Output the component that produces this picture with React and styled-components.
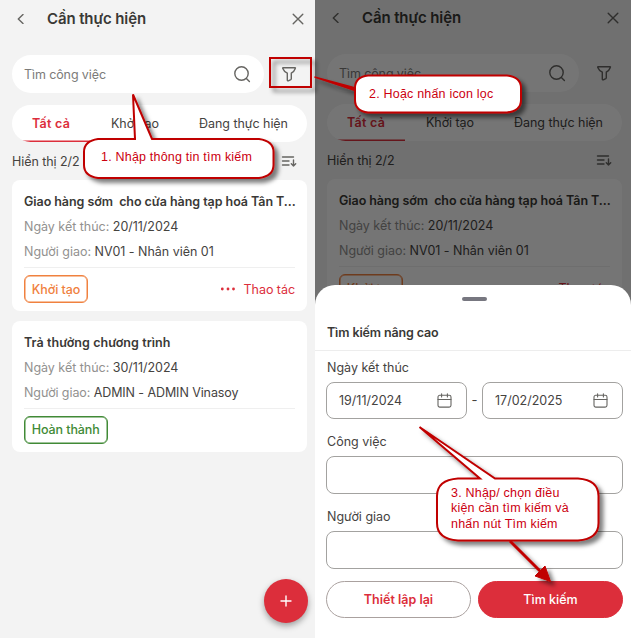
import React from "react";
import styled, { createGlobalStyle, css } from "styled-components";

const RED = "#dc2e3b";
const NOTE = "#c00000";

const Global = createGlobalStyle`
  *, *::before, *::after { box-sizing: border-box; }
  body { margin: 0; background: #fff; overflow: hidden; }
`;

const Stage = styled.div`
  position: relative;
  display: grid;
  grid-template-columns: 315px 316px;
  width: 631px;
  height: 638px;
  overflow: hidden;
  font-family: Inter, "Liberation Sans", sans-serif;
  color: #45433f;
`;

const Phone = styled.section`
  position: relative;
  height: 638px;
  overflow: hidden;
  background: #f3f3f3;
`;

const Screen = styled.div`
  width: 315px;
  margin-top: ${(p) => (p.$raised ? "-1px" : "0")};
  display: flex;
  flex-direction: column;
  padding-left: 12px;
  padding-right: 8px;
`;

const Header = styled.header`
  display: flex;
  align-items: center;
  height: 37px;
  padding: 0 2px 0 4px;
`;

const Heading = styled.h1`
  flex: 1;
  margin: 0 0 0 21px;
  font-size: 15px;
  line-height: 20px;
  font-weight: 600;
  letter-spacing: -0.12px;
  color: #3a3936;
`;

const Icon = styled.svg`
  display: block;
  flex: none;
  width: ${(p) => p.$size}px;
  height: ${(p) => p.$size}px;
  fill: none;
  stroke: ${(p) => p.$color || "#666562"};
  stroke-width: ${(p) => p.$weight || 1.4};
  stroke-linecap: round;
  stroke-linejoin: round;
`;

const SearchRow = styled.div`
  display: flex;
  align-items: center;
  margin-top: 18px;
  padding-right: 10px;
  justify-content: space-between;
`;

const SearchBox = styled.div`
  display: flex;
  align-items: center;
  justify-content: space-between;
  width: 252px;
  height: 38px;
  padding: 0 13px 0 12px;
  border-radius: 19px;
  background: #fff;
  font-size: 12.5px;
  letter-spacing: -0.1px;
  color: #7c7b79;
`;

const Tabs = styled.nav`
  display: flex;
  height: 37px;
  margin-top: 12px;
  border-radius: 18.5px;
  background: #fff;
  overflow: hidden;
`;

const Tab = styled.div`
  display: flex;
  align-items: center;
  justify-content: center;
  width: ${(p) => p.$w}px;
  height: 37px;
  font-size: 12.5px;
  letter-spacing: -0.05px;
  ${(p) =>
    p.$active &&
    css`
      box-shadow: inset 0 -1.5px 0 ${RED};
      font-weight: 600;
      letter-spacing: 0.25px;
      color: ${RED};
    `}
`;

const Count = styled.div`
  display: flex;
  align-items: center;
  justify-content: space-between;
  height: 38px;
  padding-right: 10px;
  font-size: 12.5px;
  letter-spacing: -0.07px;
`;

const Card = styled.article`
  height: 131px;
  margin-bottom: 9.5px;
  padding: 9px 12px 0;
  border-radius: 8px;
  background: #fff;
`;

const Title = styled.h2`
  margin: 0;
  font-size: 12.5px;
  line-height: 25px;
  font-weight: 600;
  letter-spacing: ${(p) => p.$ls}px;
  white-space: pre;
  color: #3a3936;
`;

const Line = styled.div`
  font-size: 12.5px;
  line-height: 25px;
  letter-spacing: ${(p) => p.$ls ?? -0.02}px;
  white-space: nowrap;
  color: #45433f;
`;

const Muted = styled.span`
  color: #92918f;
`;

const CardFoot = styled.div`
  display: flex;
  align-items: center;
  justify-content: space-between;
  margin-top: 3px;
  padding-top: 7px;
  border-top: 1px solid #efefef;
`;

const Chip = styled.div`
  display: flex;
  align-items: center;
  justify-content: center;
  width: ${(p) => p.$w}px;
  height: 28px;
  border: 1px solid ${(p) => p.$tone};
  box-shadow: inset 0 0 0 0.5px ${(p) => p.$tone};
  border-radius: 6px;
  font-size: 12.5px;
  font-weight: 500;
  letter-spacing: -0.1px;
  color: ${(p) => p.$tone};
`;

const Action = styled.div`
  display: flex;
  align-items: center;
  gap: 8px;
  font-size: 12.5px;
  letter-spacing: -0.05px;
  color: ${RED};
`;

const Fab = styled.button`
  position: absolute;
  left: 264px;
  top: 579px;
  width: 44px;
  height: 44px;
  padding: 0;
  display: flex;
  align-items: center;
  justify-content: center;
  border: 0;
  border-radius: 50%;
  background: ${RED};
  box-shadow: 0 3px 6px rgba(0, 0, 0, 0.35);
`;

const Dim = styled.div`
  position: absolute;
  inset: 0;
  background: rgba(0, 0, 0, 0.54);
`;

const Sheet = styled.div`
  position: absolute;
  left: 0;
  right: 0;
  top: 285px;
  bottom: 0;
  display: flex;
  flex-direction: column;
  border-radius: 20px 20px 0 0;
  background: #fff;
`;

const Grip = styled.div`
  align-self: center;
  width: 25px;
  height: 3.5px;
  margin: 12px 0 0 3px;
  border-radius: 2px;
  background: #777780;
`;

const SheetTitle = styled.h2`
  margin: 19.5px 0 0;
  padding: 0 12px 6px;
  height: 31px;
  border-bottom: 1px solid #ededed;
  font-size: 12.5px;
  line-height: 25px;
  font-weight: 600;
  letter-spacing: -0.13px;
  color: #3a3936;
`;

const Form = styled.div`
  padding: 4.5px 8px 0 11px;
`;

const Label = styled.div`
  height: 26px;
  font-size: 12.5px;
  line-height: 23px;
  letter-spacing: 0;
  padding-left: 1px;
`;

const Field = styled.div`
  display: flex;
  align-items: center;
  justify-content: space-between;
  width: ${(p) => (p.$w ? `${p.$w}px` : "auto")};
  height: 37.5px;
  margin-bottom: ${(p) => (p.$w ? 0 : 11.5)}px;
  padding: 0 14px 0 12px;
  border: 1px solid #a3a2a0;
  border-radius: 8px;
  font-size: 12.5px;
  letter-spacing: 0;
`;

const DateRow = styled.div`
  display: flex;
  align-items: center;
  justify-content: space-between;
  margin-bottom: 11px;
  font-size: 13px;
`;

const Buttons = styled.div`
  display: flex;
  justify-content: space-between;
  padding-top: 0.7px;
`;

const Button = styled.button`
  width: 145px;
  height: 37.5px;
  padding: 0;
  border: 1px solid ${(p) => (p.$solid ? RED : "#aaa19f")};
  border-radius: 19px;
  background: ${(p) => (p.$solid ? RED : "#fff")};
  color: ${(p) => (p.$solid ? "#fff" : RED)};
  font: ${(p) => (p.$solid ? 500 : 600)} 12.5px Inter, sans-serif;
  letter-spacing: 0;
`;

const Annotations = styled.svg`
  position: absolute;
  left: 0;
  top: 0;
  width: 631px;
  height: 638px;
`;

const Note = styled.div`
  position: absolute;
  left: ${(p) => p.$x}px;
  top: ${(p) => p.$y}px;
  font-family: "Liberation Sans", Arial, sans-serif;
  font-size: 12.5px;
  line-height: 15.5px;
  letter-spacing: 0.2px;
  white-space: pre;
  color: #cc0010;
`;

const Funnel = () => (
  <Icon $size={16} viewBox="0 0 16 16" $weight={1.4}>
    <path d="M2 1.7h12q.7 0 .3.7c-.7 2-2 3.500-4 4.800v5.600q0 .5-.5.8l-2.500 1.200q-1 .3-1-.7V7.200C4.200 6 2.600 4.500 1.800 2.400q-.3-.7.2-.7z" />
  </Icon>
);

const Calendar = () => (
  <Icon $size={15} viewBox="0 0 15 15" $weight={1.1}>
    <rect x="1" y="2.300" width="13" height="11.800" rx="1.800" />
    <path d="M1 6.500h13M4.600.8v3.200M10.400.8v3.200" />
  </Icon>
);

const tasks = [
  {
    title: "Giao hàng sớm  cho cửa hàng tạp hoá Tân T...",
    titleSpacing: -0.06,
    date: "20/11/2024",
    person: "NV01 - Nhân viên 01",
    status: "Khởi tạo",
    tone: "#f0813f",
    chipWidth: 64,
    action: true,
  },
  {
    title: "Trả thưởng chương trình",
    titleSpacing: 0.06,
    date: "30/11/2024",
    person: "ADMIN - ADMIN Vinasoy",
    personSpacing: -0.09,
    status: "Hoàn thành",
    tone: "#418a36",
    chipWidth: 83.5,
  },
];

function TaskCard({ title, titleSpacing, date, person, personSpacing, status, tone, chipWidth, action }) {
  return (
    <Card>
      <Title $ls={titleSpacing}>{title}</Title>
      <Line><Muted>Ngày kết thúc:</Muted> {date}</Line>
      <Line $ls={personSpacing}><Muted>Người giao:</Muted> {person}</Line>
      <CardFoot>
        <Chip $w={chipWidth} $tone={tone}>{status}</Chip>
        {action && (
          <Action>
            <Icon $size={16} viewBox="0 0 16 16" $color={RED} $weight={2.800}>
              <path d="M2.300 8h.01M8 8h.01M13.500 8h.01" />
            </Icon>
            Thao tác
          </Action>
        )}
      </CardFoot>
    </Card>
  );
}

function TaskList({ raised, items }) {
  return (
    <Screen $raised={raised}>
      <Header>
        <Icon $size={10} viewBox="0 0 10 10"><path d="M7 .5 2.300 5 7 9.500" /></Icon>
        <Heading>Cần thực hiện</Heading>
        <Icon $size={14} viewBox="0 0 14 14"><path d="M2.200 2.200l9.600 9.600M11.800 2.200l-9.600 9.600" /></Icon>
      </Header>
      <SearchRow>
        <SearchBox>
          Tìm công việc
          <Icon $size={18} viewBox="0 0 18 18">
            <circle cx="8.500" cy="8.500" r="6.700" /><path d="m13.400 13.400 3 3" />
          </Icon>
        </SearchBox>
        <Funnel />
      </SearchRow>
      <Tabs>
        <Tab $w={78} $active>Tất cả</Tab>
        <Tab $w={90}>Khởi tạo</Tab>
        <Tab $w={127}>Đang thực hiện</Tab>
      </Tabs>
      <Count>
        Hiển thị 2/2
        <Icon $size={16} viewBox="0 0 16 16" $weight={1.4}>
          <path d="M1.500 4h11M1.500 8h6.500M1.500 12h6.500M12.500 7v6M10.300 10.800l2.200 2.200 2.200-2.200" />
        </Icon>
      </Count>
      {items.map((task) => (
        <TaskCard key={task.title} {...task} />
      ))}
    </Screen>
  );
}

export default function App() {
  return (
    <Stage>
      <Global />
      <Phone>
        <TaskList items={tasks} />
        <Fab aria-label="+">
          <Icon $size={12} viewBox="0 0 12 12" $color="#fff" $weight={1.4}><path d="M6 1v10M1 6h10" /></Icon>
        </Fab>
      </Phone>
      <Phone>
        <TaskList raised items={tasks.slice(0, 1)} />
        <Dim />
        <Sheet>
          <Grip />
          <SheetTitle>Tìm kiếm nâng cao</SheetTitle>
          <Form>
            <Label>Ngày kết thúc</Label>
            <DateRow>
              <Field $w={141}>19/11/2024<Calendar /></Field>
              -
              <Field $w={141}>17/02/2025<Calendar /></Field>
            </DateRow>
            <Label>Công việc</Label>
            <Field />
            <Label>Người giao</Label>
            <Field />
            <Buttons>
              <Button>Thiết lập lại</Button>
              <Button $solid>Tìm kiếm</Button>
            </Buttons>
          </Form>
        </Sheet>
      </Phone>
      <Annotations viewBox="0 0 631 638">
        <defs>
          <filter id="shade" x="-20%" y="-40%" width="150%" height="200%">
            <feDropShadow dx="4" dy="4" stdDeviation="2" floodColor="#000" floodOpacity="0.5" />
          </filter>
        </defs>
        <g filter="url(#shade)" stroke={NOTE} strokeWidth="2" fill="#fff">
          <rect x="270" y="58" width="41" height="29" fill="none" />
          <path d="M314.500 77 355 87.800V90.500z" fill={NOTE} strokeWidth="1.400" />
          <path d="M98 139H135L133 94.500 152 139H259Q273.500 141 273.500 152V165Q273.500 176 259 178H98Q84 176 84 165V152Q84 141 98 139z" />
          <path d="M368 75.500H507Q521 77 521 88V100Q521 111 507 112.500H368Q355 111 355 100V88Q355 77 368 75.500z" />
          <path d="M458 478.500H480L419.500 427 495 478.500H578Q598.500 480 598.500 496V523Q598.500 539 578 540.500H458Q437 539 437 523V496Q437 480 458 478.500z" />
          <path d="M510 541 541 572" strokeWidth="3" />
          <path d="M550.500 581.500 535 576 545 566z" fill={NOTE} strokeWidth="1" />
        </g>
      </Annotations>
      <Note $x={101} $y={150}>1. Nhập thông tin tìm kiếm</Note>
      <Note $x={369} $y={86.5}>2. Hoặc nhấn icon lọc</Note>
      <Note $x={451} $y={485.5}>{"3. Nhập/ chọn điều\nkiện cần tìm kiếm và\nnhấn nút Tìm kiếm"}</Note>
    </Stage>
  );
}
